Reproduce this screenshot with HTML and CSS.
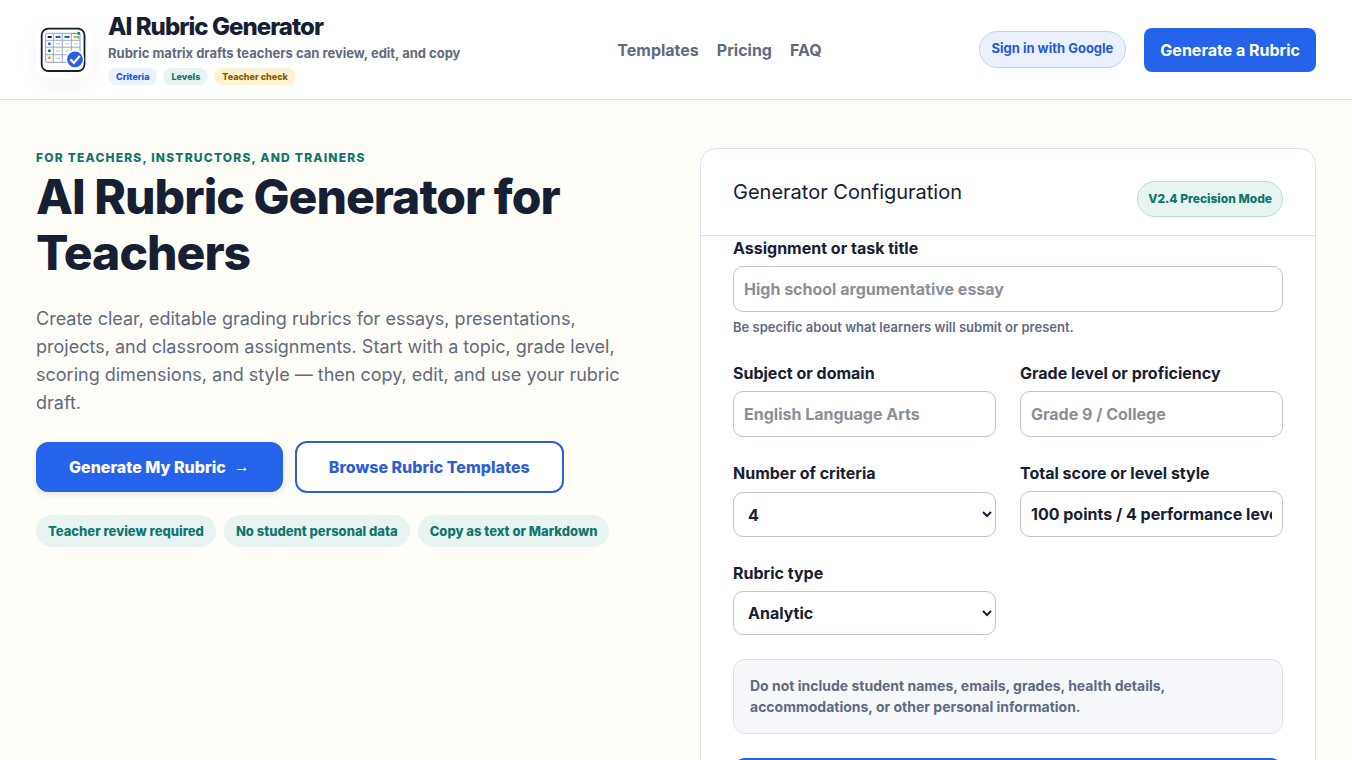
FILE: index.html
```html
<!DOCTYPE html>
<html lang="en">
  <head>
    <meta charset="UTF-8" />
    <meta name="viewport" content="width=device-width, initial-scale=1.0" />
    <title>AI Rubric Generator for Teachers</title>
    <link rel="stylesheet" href="styles.css">
  </head>
  <body>
    <header class="site-header">
      <div class="brand">
        <svg class="brand-logo" viewBox="0 0 56 56" aria-hidden="true">
          <rect x="5.7" y="6.7" width="42.8" height="42.3" rx="6.5" fill="#fff" stroke="#151d2e" stroke-width="1.8" />
          <rect x="9.7" y="11.3" width="34.3" height="29" rx="1.5" fill="#fff" stroke="#8fa0c4" />
          <path d="M17.3 11.3v29M26.3 11.3v29M35.3 11.3v29M9.7 18.3H44M9.7 25.2H44M9.7 32.7H44" stroke="#8fa0c4" stroke-width="0.9" />
          <path d="M11.7 15h4" stroke="#151d2e" stroke-width="1.9" />
          <path d="M19.6 15h5" stroke="#2456e6" stroke-width="1.9" />
          <path d="M28.5 15h5" stroke="#0f766e" stroke-width="1.9" />
          <path d="M37.5 15h4.5" stroke="#e9a820" stroke-width="1.9" />
          <path d="M20 21.8h4M29 21.8h4M38 21.8h4M20 29h4M29 29h3M20 36.5h4" stroke="#b9c7dd" />
          <circle cx="13.4" cy="21.8" r="1.5" fill="#2563eb" />
          <circle cx="13.4" cy="28.8" r="1.5" fill="#0f766e" />
          <circle cx="13.4" cy="35.8" r="1.5" fill="#eda032" />
          <path d="M42.7 5.2v3M36.5 11.6h3M42.7 14v3" stroke="#176e62" stroke-width="0.7" />
          <circle cx="42.7" cy="11.2" r="1.5" fill="#0f766e" />
          <circle cx="39" cy="37.3" r="9.3" fill="#fff" />
          <circle cx="39" cy="37.3" r="7.9" fill="#2460e4" />
          <path d="M34.3 37.4l3.5 3.5 6-7" fill="none" stroke="#fff" stroke-width="2.3" />
        </svg>
        <div class="brand-text">
          <span class="brand-name">AI Rubric Generator</span>
          <span class="brand-tagline">Rubric matrix drafts teachers can review, edit, and copy</span>
          <div class="brand-tags">
            <span class="tag tag-blue">Criteria</span>
            <span class="tag tag-green">Levels</span>
            <span class="tag tag-yellow">Teacher check</span>
          </div>
        </div>
      </div>
      <nav class="site-nav">
        <a href="#templates">Templates</a>
        <a href="#pricing">Pricing</a>
        <a href="#faq">FAQ</a>
      </nav>
      <div class="header-actions">
        <button type="button" class="signin">Sign in with Google</button>
        <a class="header-cta" href="#generator">Generate a Rubric</a>
      </div>
    </header>

    <main class="hero">
      <section class="intro">
        <p class="eyebrow">For teachers, instructors, and trainers</p>
        <h1>AI Rubric Generator for Teachers</h1>
        <p class="lead">Create clear, editable grading rubrics for essays, presentations, projects, and classroom assignments. Start with a topic, grade level, scoring dimensions, and style — then copy, edit, and use your rubric draft.</p>
        <div class="hero-actions">
          <a class="btn btn-primary" href="#generator">Generate My Rubric <span class="arrow">→</span></a>
          <a class="btn btn-secondary" href="#templates">Browse Rubric Templates</a>
        </div>
        <ul class="trust-list">
          <li>Teacher review required</li>
          <li>No student personal data</li>
          <li>Copy as text or Markdown</li>
        </ul>
      </section>

      <section class="panel" id="generator">
        <div class="panel-header">
          <h2>Generator Configuration</h2>
          <span class="mode">V2.4 Precision Mode</span>
        </div>
        <form class="rubric-form">
          <div class="field field-wide">
            <label for="title">Assignment or task title</label>
            <input id="title" type="text" placeholder="High school argumentative essay" />
            <small>Be specific about what learners will submit or present.</small>
          </div>
          <div class="field">
            <label for="subject">Subject or domain</label>
            <input id="subject" type="text" placeholder="English Language Arts" />
          </div>
          <div class="field">
            <label for="grade">Grade level or proficiency</label>
            <input id="grade" type="text" placeholder="Grade 9 / College" />
          </div>
          <div class="field">
            <label for="criteria">Number of criteria</label>
            <select id="criteria">
              <option>3</option>
              <option selected>4</option>
              <option>5</option>
              <option>6</option>
            </select>
          </div>
          <div class="field">
            <label for="score">Total score or level style</label>
            <input id="score" type="text" value="100 points / 4 performance levels" />
          </div>
          <div class="field">
            <label for="type">Rubric type</label>
            <select id="type">
              <option>Analytic</option>
              <option>Holistic</option>
            </select>
          </div>
          <p class="notice">Do not include student names, emails, grades, health details, accommodations, or other personal information.</p>
          <button type="submit" class="submit">Generate Rubric</button>
        </form>
      </section>
    </main>
  </body>
</html>
```

FILE: styles.css
```css
* {
  box-sizing: border-box;
}
body {
  margin: 0;
  background: #fffdf8;
  color: #172033;
  font-family: Inter, "Liberation Sans", sans-serif;
  font-size: 16px;
  line-height: 24px;
}
h1,
h2,
p,
ul {
  margin: 0;
  padding: 0;
}
a {
  text-decoration: none;
}

/* header */
.site-header {
  display: flex;
  align-items: center;
  justify-content: space-between;
  padding: 14px 36px;
  background: #fff;
  border-bottom: 1px solid #dbe1ea;
}
.brand {
  display: flex;
  align-items: center;
  gap: 16px;
}
.brand-logo {
  width: 56px;
  height: 56px;
  border-radius: 12px;
  background: #fff;
  box-shadow: 0 8px 24px rgba(23, 32, 51, 0.05);
}
.brand-text {
  display: flex;
  flex-direction: column;
  gap: 4px;
}
.brand-name {
  font-size: 24px;
  line-height: 26px;
  font-weight: 850;
  letter-spacing: -0.04em;
}
.brand-tagline {
  padding-bottom: 1px;
  font-size: 13px;
  line-height: 19px;
  font-weight: 700;
  color: #5f6b7f;
}
.brand-tags {
  display: flex;
  gap: 6px;
}
.tag {
  padding: 0 8px;
  border-radius: 99px;
  font-size: 9px;
  line-height: 17px;
  font-weight: 850;
}
.tag-blue {
  background: #eaf1ff;
  color: #2559dc;
}
.tag-green {
  background: #e7f4f1;
  color: #0f766e;
}
.tag-yellow {
  background: #fff3cf;
  color: #8a5a00;
}
.site-nav {
  display: flex;
  gap: 18px;
}
.site-nav a {
  color: #5f6b7f;
  font-weight: 650;
}
.header-actions {
  display: flex;
  align-items: center;
  gap: 18px;
}
.signin {
  padding: 7px 12px 9px;
  border: 1px solid #bfd0f5;
  border-radius: 99px;
  background: #eaf1fd;
  color: #2559dc;
  font-family: inherit;
  font-size: 13px;
  line-height: 19px;
  font-weight: 750;
}
.header-cta {
  padding: 10px 16px;
  border-radius: 8px;
  background: #2563eb;
  color: #fff;
  font-weight: 700;
}

/* hero */
.hero {
  display: grid;
  grid-template-columns: 1fr 1fr;
  gap: 48px;
  align-items: start;
  padding: 48px 36px;
}
.eyebrow {
  margin-bottom: 2px;
  color: #0f766e;
  font-size: 12px;
  line-height: 19px;
  font-weight: 800;
  letter-spacing: 0.1em;
  text-transform: uppercase;
}
h1 {
  font-size: 48px;
  line-height: 56px;
  font-weight: 800;
  letter-spacing: -0.02em;
}
.lead {
  margin-top: 24px;
  color: #5f6b7f;
  font-size: 18px;
  line-height: 28px;
}
.hero-actions {
  display: flex;
  flex-wrap: wrap;
  align-items: center;
  gap: 12px;
  margin-top: 24px;
}
.btn {
  padding: 12px 32px;
  border-radius: 12px;
  font-weight: 800;
}
.btn-primary {
  display: flex;
  gap: 8px;
  border: 1px solid #2563eb;
  background: #2563eb;
  color: #fff;
  box-shadow: 0 2px 6px rgba(23, 32, 51, 0.12);
}
.arrow {
  font-family: "Liberation Sans", sans-serif;
}
.btn-secondary {
  border: 2px solid #2f5fd8;
  background: #fff;
  color: #2f5fd8;
}
.trust-list {
  display: flex;
  flex-wrap: wrap;
  gap: 8px;
  margin-top: 22px;
  list-style: none;
}
.trust-list li {
  padding: 6px 12px;
  border-radius: 99px;
  background: #e7f4f1;
  color: #0f766e;
  font-size: 13px;
  line-height: 20px;
  font-weight: 800;
}

/* generator panel */
.panel {
  border: 1px solid #dbe1ea;
  border-radius: 16px;
  background: #fff;
}
.panel-header {
  display: flex;
  align-items: flex-start;
  justify-content: space-between;
  padding: 32px 32px 18px;
  border-bottom: 1px solid #dbe1ea;
}
.panel-header h2 {
  font-size: 20px;
  line-height: 22px;
  font-weight: 400;
}
.mode {
  padding: 8px 10px;
  border: 1px solid #b9dcd5;
  border-radius: 99px;
  background: #e7f4f1;
  color: #0f766e;
  font-size: 12px;
  line-height: 18px;
  font-weight: 850;
}
.rubric-form {
  display: grid;
  grid-template-columns: 1fr 1fr;
  gap: 24px;
  padding: 0 32px 32px;
}
.field {
  display: grid;
  gap: 6px;
  min-width: 0;
}
.field-wide,
.notice,
.submit {
  grid-column: 1 / -1;
}
.field label {
  font-weight: 650;
}
.field input,
.field select {
  width: 100%;
  min-height: 44px;
  padding: 10px;
  border: 1px solid #bcc5d3;
  border-radius: 10px;
  background: #fff;
  color: #172033;
  font-family: inherit;
  font-size: 16px;
  font-weight: 650;
}
.field input {
  height: 46px;
}
.field input::placeholder {
  color: #8b8f98;
}
.field small {
  color: #5f6b7f;
  font-size: 13px;
  line-height: 19px;
  font-weight: 600;
}
.notice {
  padding: 15px 16px 16px;
  border: 1px solid #dbe1ea;
  border-radius: 12px;
  background: #f6f8fc;
  color: #5f6b7f;
  font-size: 14px;
  line-height: 21px;
  font-weight: 650;
}
.submit {
  padding: 14px 32px;
  border: 0;
  border-radius: 12px;
  background: #2563eb;
  color: #fff;
  font-family: inherit;
  font-size: 16px;
  line-height: 24px;
  font-weight: 700;
}
```
